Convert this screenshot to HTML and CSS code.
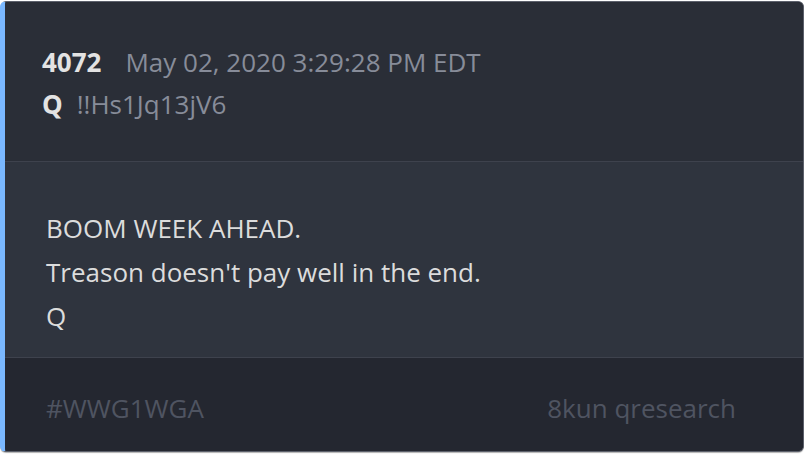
FILE: index.html
```html
<!DOCTYPE html>
<html>
<head>
<meta charset="utf-8">
<link rel="stylesheet" href="styles.css">
</head>
<body>
<div class="card">
  <div class="head">
    <div class="row"><span class="num">4072</span><span class="date">May 02, 2020 3:29:28 PM EDT</span></div>
    <div class="row"><span class="name">Q</span><span class="trip">!!Hs1Jq13jV6</span></div>
  </div>
  <div class="body">
    <p>BOOM WEEK AHEAD.</p>
    <p>Treason doesn't pay well in the end.</p>
    <p>Q</p>
  </div>
  <div class="foot">
    <span>#WWG1WGA</span>
    <span>8kun qresearch</span>
  </div>
</div>
</body>
</html>
```
FILE: styles.css
```css
html, body { margin: 0; padding: 0; background: #ffffff; }
body { font-family: "Open Sans", "Noto Sans", sans-serif; width: 804px; height: 454px; overflow: hidden; }
.card {
  box-sizing: border-box;
  margin-top: 1px;
  height: 451px;
  width: 804px;
  border: 1px solid #5d616c;
  border-left: 5px solid #7ab8ff;
  border-radius: 6px;
  overflow: hidden;
  display: flex;
  flex-direction: column;
  background: #242730;
  box-shadow: 0 1px 1px rgba(0,0,0,0.3);
}
.head {
  height: 160px;
  flex: none;
  box-sizing: border-box;
  padding: 39px 0 0 37px;
  background: #2a2e37;
  border-bottom: 1px solid #3e424d;
}
.row { display: flex; align-items: baseline; line-height: 42px; height: 42px; font-size: 26px; }
.num { font-weight: 700; color: #e3e3e3; margin-right: 24px; }
.date { color: #878c99; }
.name { font-weight: 700; color: #e3e3e3; margin-right: 14px; }
.trip { color: #878c99; }
.body {
  height: 196px;
  flex: none;
  box-sizing: border-box;
  padding: 44px 0 0 41px;
  background: #2f343e;
  border-bottom: 1px solid #3e424d;
}
.body p { margin: 0; font-size: 26px; line-height: 44px; color: #dcdcdc; }
.foot {
  flex: 1;
  background: #242730;
  display: flex;
  justify-content: space-between;
  align-items: center;
  padding: 6px 67px 0 41px;
  font-size: 26px;
  color: #4f5461;
}
```
